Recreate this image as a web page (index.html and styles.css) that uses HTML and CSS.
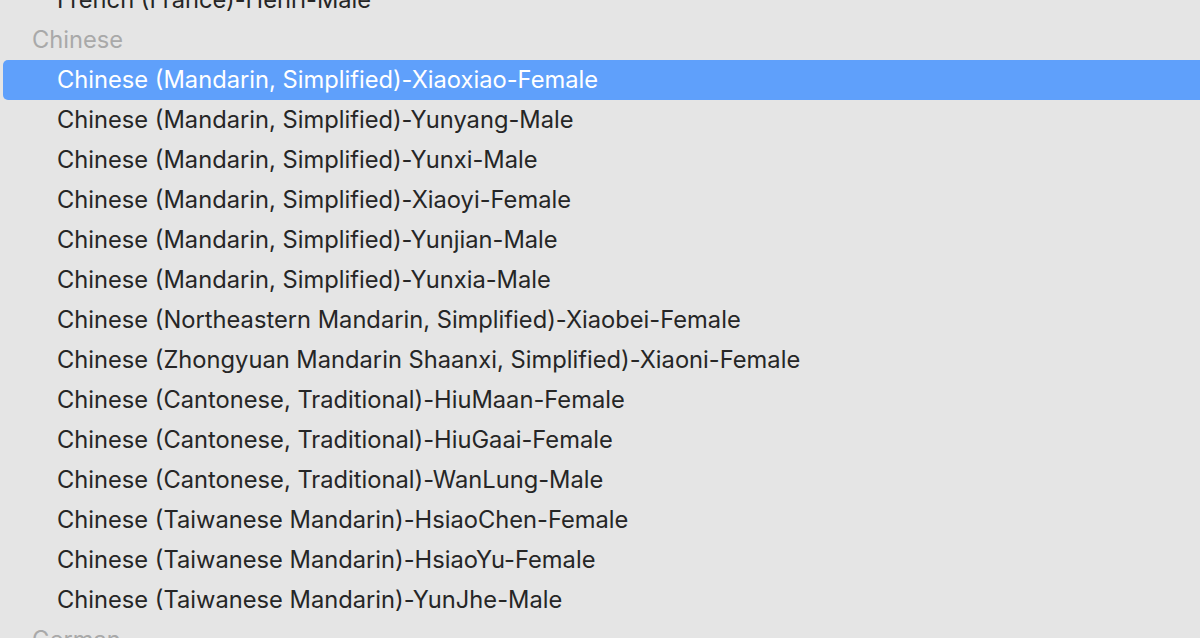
FILE: index.html
```html
<!DOCTYPE html>
<html>
<head>
<meta charset="utf-8">
<link rel="stylesheet" href="styles.css">
</head>
<body>
<div class="menu">
  <div class="item">French (France)-Henri-Male</div>
  <div class="group">Chinese</div>
  <div class="item selected">Chinese (Mandarin, Simplified)-Xiaoxiao-Female</div>
  <div class="item">Chinese (Mandarin, Simplified)-Yunyang-Male</div>
  <div class="item">Chinese (Mandarin, Simplified)-Yunxi-Male</div>
  <div class="item">Chinese (Mandarin, Simplified)-Xiaoyi-Female</div>
  <div class="item">Chinese (Mandarin, Simplified)-Yunjian-Male</div>
  <div class="item">Chinese (Mandarin, Simplified)-Yunxia-Male</div>
  <div class="item">Chinese (Northeastern Mandarin, Simplified)-Xiaobei-Female</div>
  <div class="item">Chinese (Zhongyuan Mandarin Shaanxi, Simplified)-Xiaoni-Female</div>
  <div class="item">Chinese (Cantonese, Traditional)-HiuMaan-Female</div>
  <div class="item">Chinese (Cantonese, Traditional)-HiuGaai-Female</div>
  <div class="item">Chinese (Cantonese, Traditional)-WanLung-Male</div>
  <div class="item">Chinese (Taiwanese Mandarin)-HsiaoChen-Female</div>
  <div class="item">Chinese (Taiwanese Mandarin)-HsiaoYu-Female</div>
  <div class="item">Chinese (Taiwanese Mandarin)-YunJhe-Male</div>
  <div class="group">German</div>
</div>
</body>
</html>
```
FILE: styles.css
```css
html, body {
  margin: 0;
  padding: 0;
  height: 100%;
  overflow: hidden;
  background: #e5e5e5;
}
.menu {
  margin-top: -20px;
  padding-left: 3px;
  font-family: Inter, "Noto Sans", sans-serif;
  font-size: 23.7px;
  color: #262626;
}
.item, .group {
  height: 40px;
  line-height: 40px;
  white-space: nowrap;
}
.item {
  padding-left: 54px;
}
.group {
  padding-left: 29px;
  color: #a9a9a9;
}
.selected {
  background: #5fa0fb;
  color: #ffffff;
  border-radius: 5px 0 0 5px;
}
```
